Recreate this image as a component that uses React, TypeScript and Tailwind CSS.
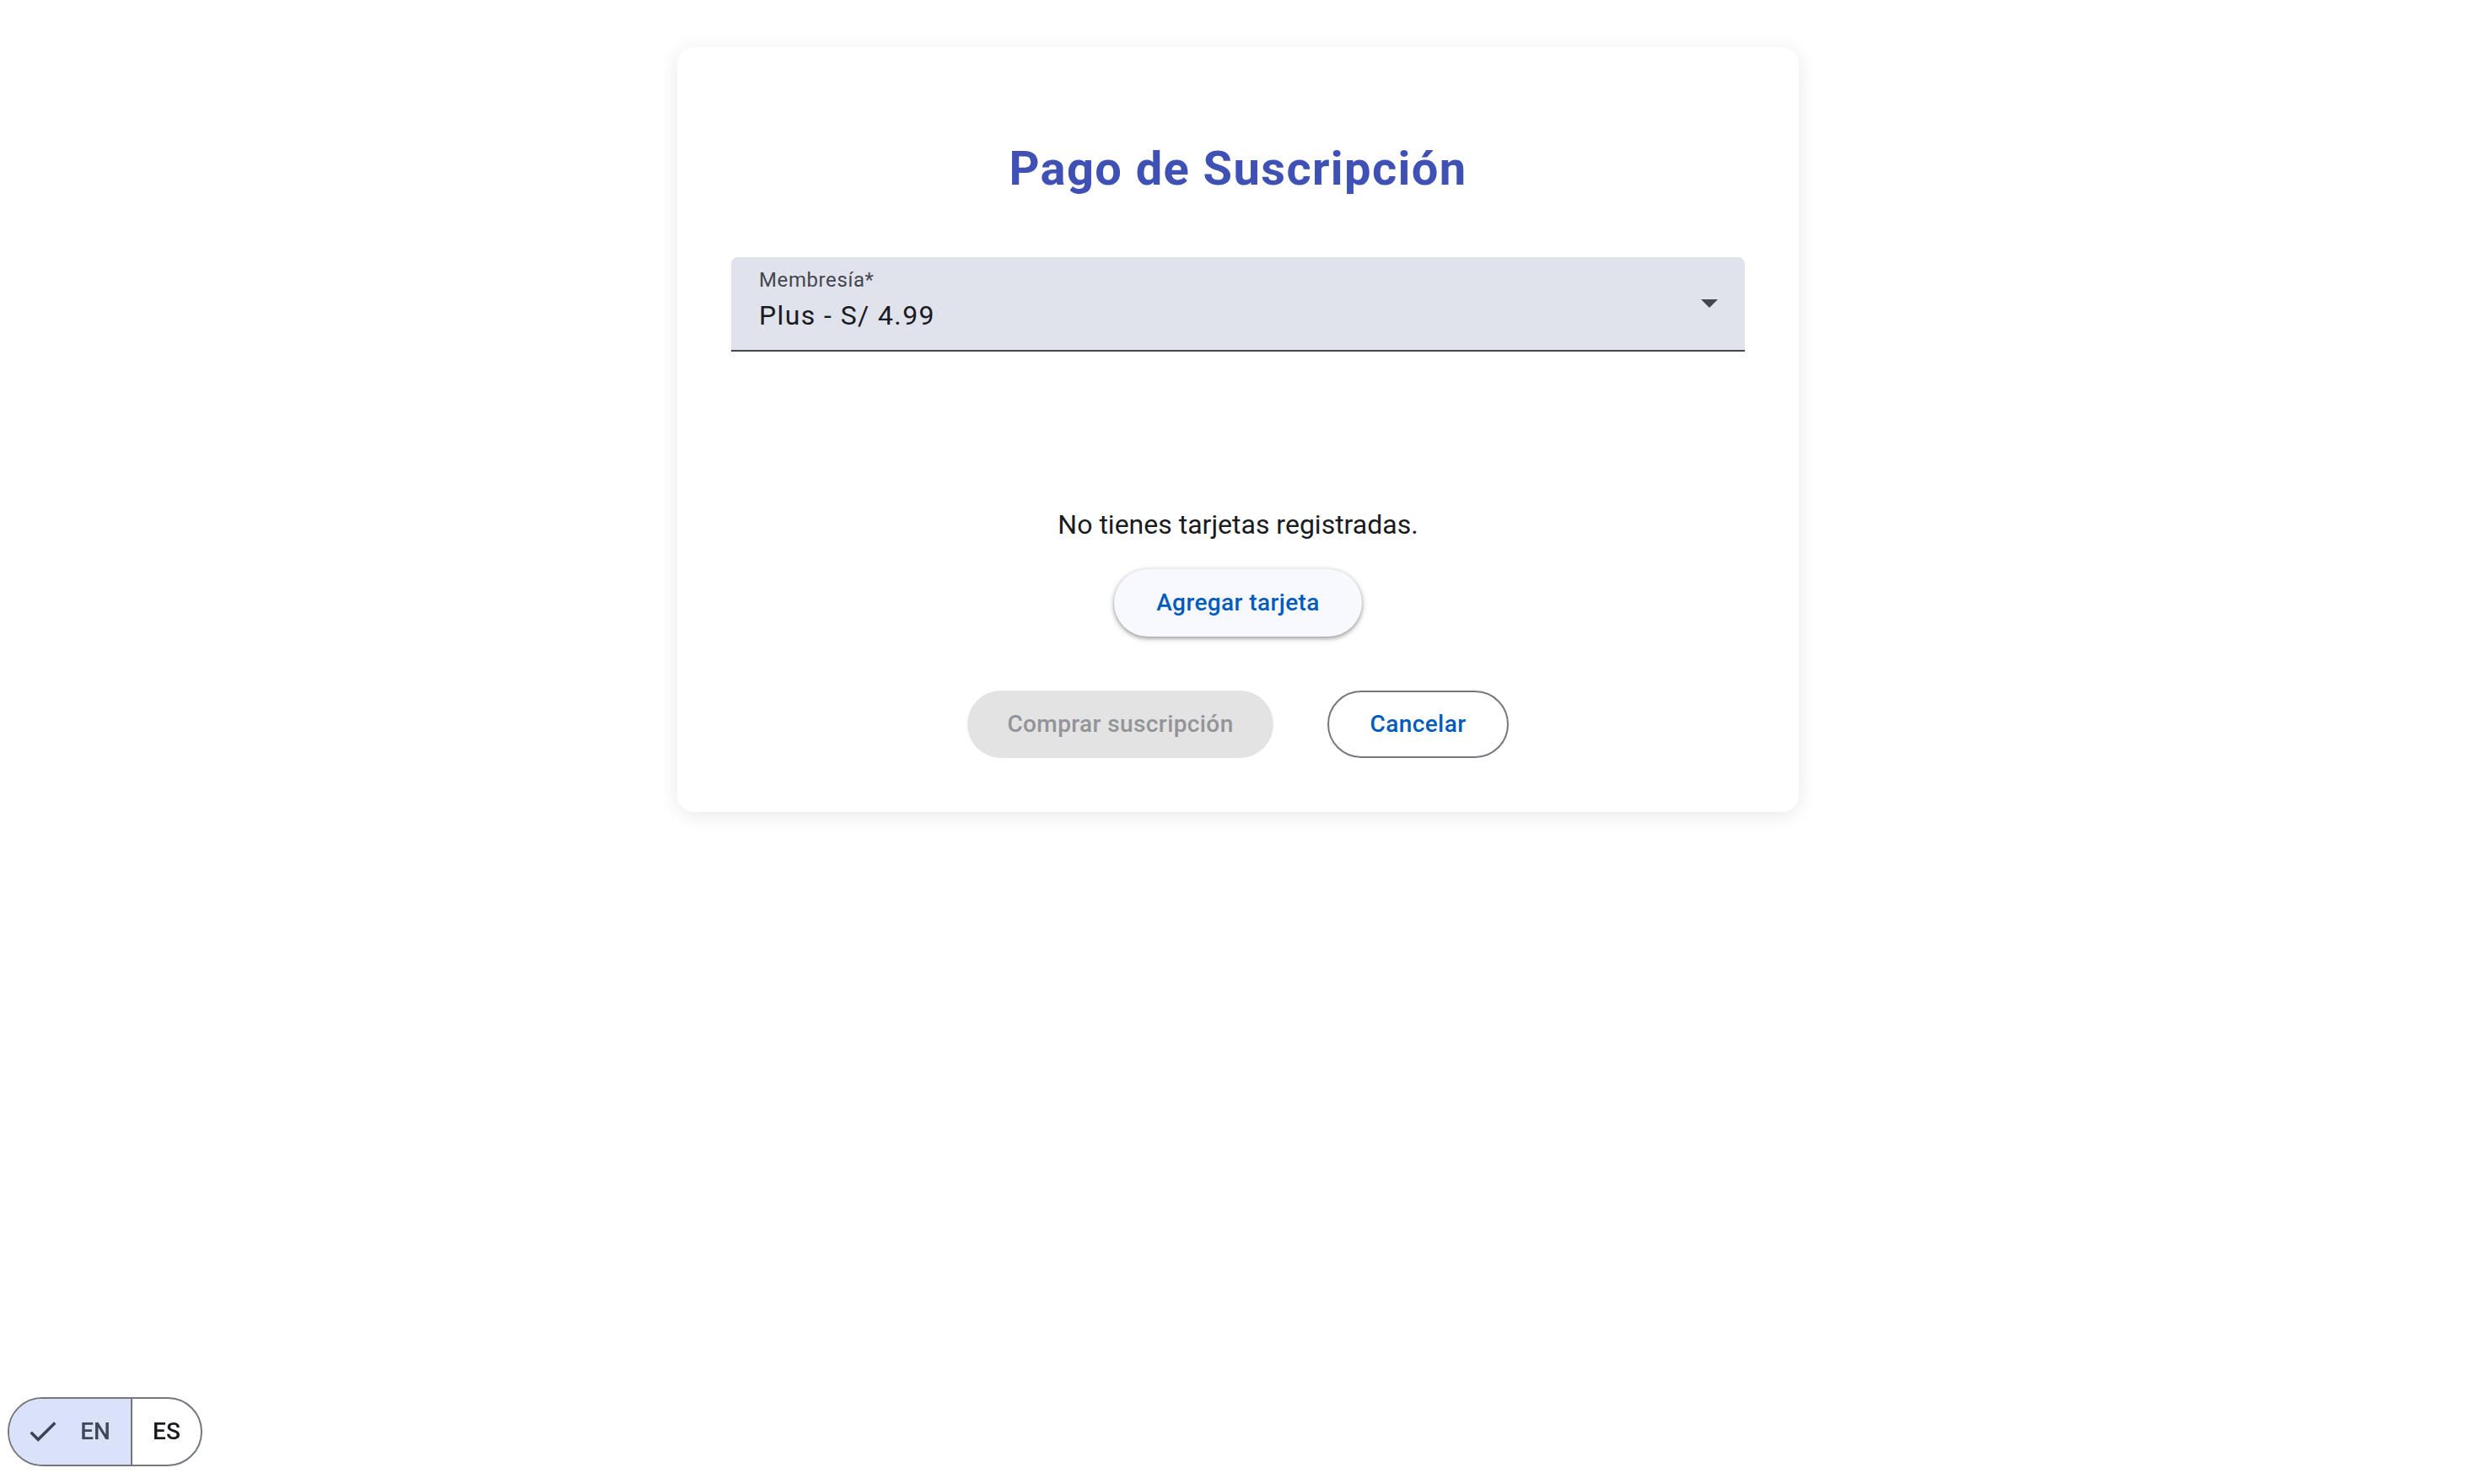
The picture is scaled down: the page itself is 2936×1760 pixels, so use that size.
const FONT = "font-['Roboto','Noto_Sans',sans-serif]";

function CheckIcon() {
  return (
    <svg width="32" height="24" viewBox="3.4 5.5 17.7 13.6" className="fill-[#3c4357]">
      <path d="M9 16.17L4.83 12l-1.42 1.41L9 19 21 7l-1.41-1.41z" />
    </svg>
  );
}

function LangToggle() {
  return (
    <div className="fixed bottom-[21px] left-[9px] flex h-[82px] w-[231px] overflow-hidden rounded-full border-2 border-[#74777f]">
      <button className="flex w-[146px] items-center justify-center gap-[28px] border-r-2 border-[#74777f] bg-[#dae2f9] text-[28px] font-medium text-[#3f4759]">
        <CheckIcon />
        <span>EN</span>
      </button>
      <button className="flex flex-1 items-center justify-center text-[28px] font-medium text-[#1a1b21]">
        ES
      </button>
    </div>
  );
}

function MembershipSelect() {
  return (
    <div className="flex h-[112px] w-full items-center rounded-t-[8px] border-b-2 border-[#44464f] bg-[#e0e2ec] pl-[33px] pr-[32px]">
      <div className="flex flex-1 flex-col self-start pt-[11px]">
        <span className="text-[24px] leading-[32px] tracking-[0.6px] text-[#44464f]">Membresía*</span>
        <span className="mt-[2px] text-[32px] leading-[48px] tracking-[1.4px] text-[#1a1b21]">Plus - S/ 4.99</span>
      </div>
      <svg width="20" height="10" viewBox="0 0 20 10" className="fill-[#44464f]">
        <path d="M0 0h20L10 10z" />
      </svg>
    </div>
  );
}

export default function App() {
  return (
    <div className={`relative min-h-screen w-full bg-white ${FONT}`}>
      <div className="flex justify-center pt-[56px]">
        <div className="flex w-[1330px] flex-col items-center rounded-[20px] bg-white px-[64px] pb-[64px] pt-[112px] shadow-[0_4px_24px_rgba(0,0,0,0.09)]">
          <h1 className="text-center text-[56px] font-bold leading-[64px] tracking-[1.4px] text-[#3f51b5]">Pago de Suscripción</h1>

          <div className="mt-[73px] w-full">
            <MembershipSelect />
          </div>

          <p className="mt-[181px] text-[32px] leading-[48px] text-[#1a1b21]">No tienes tarjetas registradas.</p>

          <button className="mt-[29px] h-[80px] w-[294px] rounded-full bg-[#f8f9ff] text-[28px] font-medium tracking-[0.4px] text-[#005cbb] shadow-[0_2px_4px_rgba(0,0,0,0.3),0_2px_6px_2px_rgba(0,0,0,0.12)]">
            Agregar tarjeta
          </button>

          <div className="mt-[64px] flex gap-[64px]">
            <button disabled className="h-[80px] w-[363px] rounded-full bg-[#e3e3e4] text-[28px] font-medium tracking-[0.4px] text-[#939497]">
              Comprar suscripción
            </button>
            <button className="h-[80px] w-[215px] rounded-full border-2 border-[#74777f] text-[28px] font-medium tracking-[0.4px] text-[#005cbb]">
              Cancelar
            </button>
          </div>
        </div>
      </div>
      <LangToggle />
    </div>
  );
}
